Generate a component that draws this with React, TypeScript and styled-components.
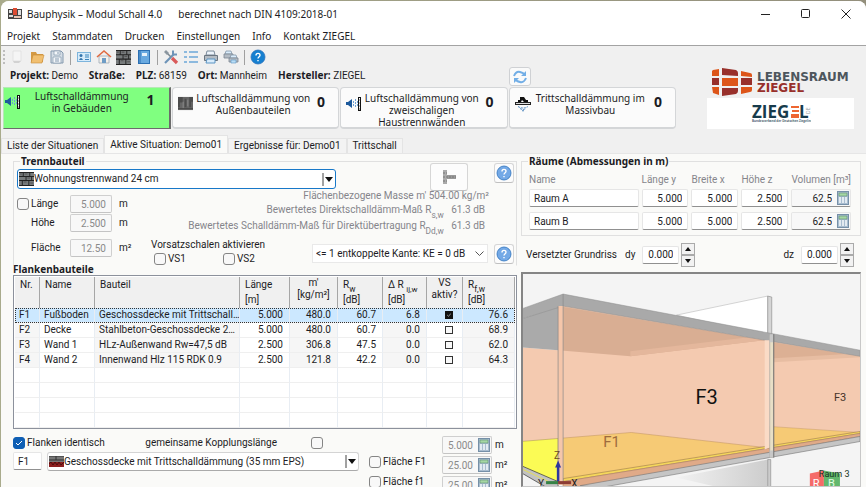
import React, { useState } from 'react';
import styled, { createGlobalStyle, css } from 'styled-components';

const uiFont = "'Noto Sans', 'Open Sans', sans-serif";

const Global = createGlobalStyle`
  *, *::before, *::after { box-sizing: border-box; }
  html, body, #root { height: 100%; }
  body {
    margin: 0;
    overflow: hidden;
    background: linear-gradient(90deg, #a9ab8c, #938f7c);
    font-family: Roboto, 'Noto Sans', sans-serif;
    font-size: 10px;
    line-height: 12px;
    color: #1c1c24;
  }
  button, input, select { font: inherit; color: inherit; margin: 0; }
`;

const Window = styled.div`
  display: flex;
  flex-direction: column;
  height: calc(100vh - 1px);
  margin: 1px 0 0 1px;
  overflow: hidden;
  background: #f0f0f0;
  border-radius: 8px 8px 0 0;
`;

const TitleBar = styled.header`
  display: flex;
  align-items: center;
  height: 26px;
  flex: none;
  padding-left: 7px;
  gap: 5px;
  background: #fff;
  font-family: ${uiFont};
`;
const TitleText = styled.span`margin-right: 11px;`;
const WindowButtons = styled.div`display: flex; margin-left: auto;`;
const WindowButton = styled.button`
  width: 40px;
  height: 24px;
  padding: 0;
  border: 0;
  background: none;
  display: grid;
  place-items: center;
`;

const MenuBar = styled.nav`
  display: flex;
  flex: none;
  height: 19px;
  padding: 2px 6px 0;
  gap: 12px;
  background: #fff;
  border-bottom: 1px solid #a3a3a3;
  font-family: ${uiFont};
`;
const MenuItem = styled.button`
  padding: 0;
  border: 0;
  background: none;
  height: 14px;
`;

const ToolBar = styled.div`
  display: flex;
  align-items: center;
  flex: none;
  height: 21px;
  padding: 1px 2px 0;
  gap: 4px;
`;
const Tool = styled.button`
  width: 16px;
  height: 16px;
  padding: 0;
  border: 0;
  background: none;
  svg { display: block; }
`;
const Separator = styled.span`width: 1px; height: 15px; background: #a0a0a0; margin: 0 1px;`;
const Grip = styled.span`
  width: 2px;
  height: 14px;
  background: repeating-linear-gradient(#bdbdbd 0 2px, transparent 2px 4px);
`;

const Header = styled.div`
  display: flex;
  flex: none;
  gap: 31px;
  padding: 0 12px 0 2px;
`;
const Situations = styled.div`
  flex: 1;
  display: grid;
  grid-template-columns: repeat(4, minmax(0, 1fr));
  grid-template-rows: 20px 42px;
  column-gap: 1px;
`;
const ProjectInfo = styled.div`
  grid-column: 1 / 4;
  display: flex;
  gap: 11px;
  padding: 2px 0 0 7px;
  white-space: nowrap;
  b { font-family: ${uiFont}; }
`;
const RefreshButton = styled.button`
  width: 22px;
  height: 19px;
  padding: 0;
  border: 1px solid #cfd1d4;
  border-radius: 3px;
  background: #fafafa;
  display: grid;
  place-items: center;
`;
const SituationCard = styled.button<{ $active?: boolean }>`
  display: grid;
  grid-template-columns: 18px 1fr 20px;
  align-items: start;
  padding: 4px 7px 0 5px;
  line-height: 12px;
  white-space: nowrap;
  text-align: center;
  font-family: ${uiFont};
  background: #fbfbfb;
  border: 1px solid #d4d6d8;
  border-bottom-width: 2px;
  border-radius: 4px;
  svg { margin-top: 4px; }
  ${p => p.$active && css`
    padding: 2px 8px 0 1px;
    background: #80ff80;
    border-color: #b5e8b5 #6c6c6c #6c6c6c #b5e8b5;
    border-width: 1px 2px 1px 1px;
    border-radius: 0;
  `}
`;
const Count = styled.strong`font-size: 14px; line-height: 20px;`;

const Logos = styled.div`width: 147px; flex: none;`;
const LogoTop = styled.div`height: 31px; padding-left: 5px;`;
const LogoBottom = styled.div`height: 31px; background: #fff; display: grid; place-items: center;`;

const Tabs = styled.div`
  display: flex;
  align-items: flex-end;
  flex: none;
  height: 24px;
`;
const Tab = styled.button<{ $active?: boolean }>`
  height: ${p => (p.$active ? 18 : 15)}px;
  padding: 0 5px;
  white-space: nowrap;
  border: 1px solid #e4e4e4;
  border-bottom: 0;
  background: ${p => (p.$active ? '#fafaf8' : '#f3f3f3')};
`;

const Page = styled.main`
  flex: 1;
  min-height: 0;
  display: grid;
  grid-template-columns: 504fr 340fr;
  gap: 4px;
  padding: 1px 5px 0 12px;
  background: #fafaf8;
  overflow: hidden;
  border-top: 1px solid #e6e6e6;
`;
const Column = styled.div`display: flex; flex-direction: column; min-width: 0; min-height: 0;`;

const Group = styled.fieldset<{ $open?: boolean }>`
  margin: 0;
  min-width: 0;
  padding: 0 2px 0 3px;
  border: 1px solid #e0e0e0;
  ${p => p.$open && css`border-bottom-color: transparent;`}
`;
const Legend = styled.legend`
  margin-left: 3px;
  padding: 0 1px;
  font-family: ${uiFont};
  font-weight: 700;
  line-height: 12px;
`;
const Heading = styled.h2`margin: -3px 0 0; font-family: ${uiFont}; font-size: 10px; line-height: 12px; font-weight: 700;`;

const ComponentRow = styled.div`
  display: flex;
  align-items: flex-start;
  height: 27px;
  margin-top: -4px;
`;
const Combo = styled.div<{ $focus?: boolean }>`
  display: flex;
  align-items: center;
  flex: 0 1 ${p => (p.$focus ? 319 : 312)}px;
  min-width: 0;
  height: ${p => (p.$focus ? 20 : 19)}px;
  margin-top: ${p => (p.$focus ? 6 : 0)}px;
  padding: 0 1px;
  border: 1px solid ${p => (p.$focus ? '#1878c8' : '#d4d4d4')};
  border-bottom-color: ${p => (p.$focus ? '#1878c8' : '#aaa')};
  border-radius: 3px;
  background: #fff;
`;
const ComboSelect = styled.select`
  flex: 1;
  min-width: 0;
  height: 100%;
  padding: 0;
  border: 0;
  background: none;
  appearance: none;
  outline: 0;
`;
const SquareButton = styled.button<{ $wide?: boolean }>`
  flex: none;
  width: ${p => (p.$wide ? 38 : 20)}px;
  height: ${p => (p.$wide ? 28 : 20)}px;
  padding: 0;
  display: grid;
  place-items: center;
  border: 1px solid #d6d6d6;
  border-bottom-color: #c0c0c0;
  border-radius: 3px;
  background: #fcfcfc;
  ${p => p.$wide && css`margin: 0 26px 0 auto;`}
`;

const GroupBody = styled.div`display: flex; gap: 4px;`;
const Dimensions = styled.div`
  display: grid;
  grid-template-columns: 53px 42px 20px;
  grid-template-rows: 18px 18px 24px;
  row-gap: 1px;
  align-items: center;
  align-content: start;
  padding-top: 5px;
  width: 130px;
  > span { padding-left: 7px; }
  > :nth-child(n + 7) { align-self: end; }
`;
const DimLabel = styled.label<{ $indent?: boolean }>`
  display: flex;
  align-items: center;
  height: 18px;
  gap: 2px;
  padding-left: ${p => (p.$indent ? 14 : 0)}px;
`;
const Unit = styled.span`line-height: 18px;`;
const Check = styled.input.attrs({ type: 'checkbox' })<{ $small?: boolean }>`
  appearance: none;
  flex: none;
  width: ${p => (p.$small ? 8 : 12)}px;
  height: ${p => (p.$small ? 8 : 12)}px;
  border: 1px solid ${p => (p.$small ? '#333' : '#858585')};
  border-radius: ${p => (p.$small ? 0 : 3)}px;
  background: #f8f8f8;
  &:checked {
    border-color: ${p => (p.$small ? '#111' : '#0f5fb4')};
    background: ${p => (p.$small ? '#111' : '#0f5fb4')}
      url("data:image/svg+xml,%3Csvg xmlns='http://www.w3.org/2000/svg' viewBox='0 0 10 10'%3E%3Cpath d='M2 5l2 2 4-4' fill='none' stroke='white'/%3E%3C/svg%3E") center / contain;
  }
`;
const Field = styled.input<{ $muted?: boolean; $text?: boolean }>`
  width: 100%;
  min-width: 0;
  height: 18px;
  padding: 0 5px 0 4px;
  text-align: ${p => (p.$text ? 'left' : 'right')};
  border: 1px solid ${p => (p.$muted ? '#cfcfcf' : '#e6e6e6')};
  border-bottom-color: ${p => (p.$muted ? '#c4c4c4' : '#909090')};
  border-radius: 2px;
  background: ${p => (p.$muted ? '#f8f8f8' : '#fff')};
  color: ${p => (p.$muted ? '#8a8a8a' : 'inherit')};
  outline: 0;
`;
const Results = styled.div`flex: 1; min-width: 0;`;
const Result = styled.div<{ $first?: boolean }>`
  height: ${p => (p.$first ? 14 : 16)}px;
  padding-right: ${p => (p.$first ? 25 : 29)}px;
  text-align: right;
  white-space: nowrap;
  color: #85858b;
  sub { position: relative; top: 5px; vertical-align: baseline; line-height: 0; margin-right: 5px; }
`;
const Lining = styled.div`display: flex; gap: 6px; margin-top: 8px; align-items: flex-start;`;
const LiningChecks = styled.div`flex: 1; margin-top: -5px;`;
const CheckLine = styled.div`display: flex; gap: 37px; padding-left: 3px; margin-top: 2px;`;
const CheckLabel = styled.label`display: flex; align-items: center; gap: 2px; white-space: nowrap;`;
const EdgeSelect = styled.div`
  display: flex;
  align-items: center;
  width: 176px;
  height: 19px;
  padding: 0 3px;
  border: 1px solid #e9e9e9;
  background: #fff;
`;

const TableBox = styled.div`
  padding: 1px 1px 0;
  border: 1px solid #8c919c;
  background: #fff;
`;
const Table = styled.table`
  width: 100%;
  table-layout: fixed;
  border-collapse: separate;
  border-spacing: 0;
`;
const Th = styled.th<{ $center?: boolean }>`
  height: 31px;
  padding: 0 0 0 ${p => (p.$center ? 0 : 5)}px;
  font-weight: 400;
  text-align: ${p => (p.$center ? 'center' : 'left')};
  vertical-align: top;
  background: #f0f0f0;
  border-right: 1px solid #a6a6a6;
  white-space: nowrap;
  line-height: ${p => (p.$center ? 12 : 15)}px;
  sub { position: relative; top: 4px; vertical-align: baseline; line-height: 0; }
  small { font-size: 8px; }
`;
const Tr = styled.tr<{ $selected?: boolean }>`
  ${p => p.$selected && css`
    && td { background: #cce8ff; }
    outline: 1px dotted #333;
    outline-offset: -1px;
  `}
`;
const Td = styled.td<{ $num?: boolean; $grey?: boolean; $mid?: boolean }>`
  height: 15px;
  padding: 0 ${p => (p.$num ? 6 : 0)}px 0 ${p => (p.$mid ? 9 : 4)}px;
  line-height: 14px;
  overflow: hidden;
  white-space: nowrap;
  text-align: ${p => (p.$num ? 'right' : 'left')};
  background: ${p => (p.$grey ? '#f6f6f6' : '#fff')};
  border-right: 1px solid #e8edf3;
  border-bottom: 1px solid #efefef;
  input { display: block; margin: 0 auto; }
`;

const Bottom = styled.div`display: flex; padding-top: 7px; flex: none;`;
const FlankArea = styled.div`flex: 0 1 346px; min-width: 0;`;
const FlankTop = styled.div`display: flex; align-items: center; height: 13px; > :last-child { margin: 0 36px 0 auto; gap: 34px; }`;
const FlankPick = styled.div`display: grid; grid-template-columns: 29px 1fr; gap: 5px; margin-top: 3px;`;
const AreaChecks = styled.div`display: grid; align-content: start; gap: 8px; padding: 20px 0 0 10px; width: 83px;`;
const AreaValues = styled.div`display: grid; gap: 2px; width: 72px;`;
const AreaLine = styled.div`display: flex; align-items: center; gap: 3px;`;
const ValueBox = styled.div<{ $muted?: boolean }>`
  display: flex;
  align-items: center;
  width: ${p => (p.$muted ? '50px' : 'auto')};
  min-width: 0;
  height: 18px;
  padding-right: 1px;
  border: 1px solid ${p => (p.$muted ? '#cfcfcf' : '#e6e6e6')};
  border-bottom-color: ${p => (p.$muted ? '#c4c4c4' : '#909090')};
  border-radius: 2px;
  background: #f8f8f8;
`;
const BareField = styled.input<{ $muted?: boolean }>`
  flex: 1;
  min-width: 0;
  width: 100%;
  height: 16px;
  padding: 0 5px 0 0;
  border: 0;
  background: none;
  text-align: right;
  outline: 0;
  color: ${p => (p.$muted ? '#8a8a8a' : 'inherit')};
`;
const CalcButton = styled.button`padding: 0; border: 0; background: none; display: block; svg { display: block; }`;

const Rooms = styled.div`
  display: grid;
  grid-template-columns: 112fr 48fr 48fr 48fr 55fr;
  column-gap: 3px;
  row-gap: 5px;
  padding: 7px 7px 5px 4px;
  > * { min-width: 0; }
  > span { color: #85858b; white-space: nowrap; margin-bottom: -2px; }
  > span:last-of-type { justify-self: end; min-width: max-content; }
`;
const Offsets = styled.div`
  display: flex;
  align-items: center;
  height: 36px;
  padding: 1px 7px 0 5px;
  > span { margin-right: 8px; }
`;
const OffsetGroup = styled.label<{ $end?: boolean }>`
  display: flex;
  align-items: center;
  gap: 7px;
  ${p => p.$end && css`margin-left: auto;`}
  input { width: 37px; }
`;
const Spinner = styled.span`display: grid; margin-left: -5px;`;
const Spin = styled.button`
  width: 14px;
  height: 12px;
  padding: 0;
  display: grid;
  place-items: center;
  border: 1px solid #aaa;
  background: #f2f2f2;
`;
const Viewport = styled.div`
  flex: 1;
  min-height: 0;
  overflow: hidden;
  background: #f4f4f4;
  border: 1px solid #c8c8c8;
  border-top: 2px solid #858585;
  border-left: 2px solid #858585;
  svg { display: block; width: 100%; height: 100%; }
`;

const Brick = ({ w = 16, h = 14 }: { w?: number; h?: number }) => (
  <svg width={w} height={h} viewBox="0 0 16 14" preserveAspectRatio="none">
    <rect width="16" height="14" fill="#222" />
    <path d="M0 1h4v3H0zM5 1h6v3H5zM12 1h4v3h-4zM0 5h7v3H0zM8 5h5v3H8zM14 5h2v3h-2zM0 9h3v4H0zM4 9h6v4H4zM11 9h5v4h-5z" fill="#777b7c" />
    <path d="M1 2h2M6 2h3M9 6h3M5 10h3M12 11h3" stroke="#555" />
  </svg>
);
const Insulation = () => (
  <svg width="15" height="15" viewBox="0 0 16 14">
    <rect width="16" height="14" fill="#666" />
    <path d="M0 0h5v6H2v5H0zM7 2h2v9H7zM12 0h4v5h-2v6h-2z" fill="#4c4c4c" />
    <path d="M5 5h1v7H5zM10 3h1v7h-1z" fill="#8c8c8c" />
    <path d="M0 12.500h16" stroke="#444" />
  </svg>
);
const SlabIcon = () => (
  <svg width="15" height="11" viewBox="0 0 15 11">
    <rect width="15" height="11" fill="#777" />
    <path d="M0 0h15M0 4h15M7 0v4" stroke="#333" />
    <rect y="6" width="15" height="5" fill="#8c1f1f" />
    <path d="M0 8l2-2 2 3 2-3 2 3 2-3 2 3 3-3" fill="none" stroke="#4b0f0f" />
  </svg>
);
const Speaker = () => (
  <svg width="16" height="16" viewBox="0 0 16 16">
    <path d="M0 6h2l4-3v9L2 9H0z" fill="#1d5a9c" />
    <path d="M7.500 5v5M9.500 3v9M11.500 5v5" stroke="#6ca0d4" strokeDasharray="2 1" fill="none" />
    <rect x="12.500" y="1.500" width="2" height="13" fill="#fff" stroke="#111" />
    <path d="M13 4h1M13 7h1M13 10h1M13 13h1" stroke="#333" strokeWidth=".7" />
  </svg>
);
const Impact = () => (
  <svg width="16" height="16" viewBox="0 0 16 16">
    <path d="M5 1h4l2 3h2v2H9L7 4 6 6H3V4h2z" fill="#111" />
    <rect x=".5" y="6.500" width="15" height="2" fill="#ddd" stroke="#222" />
    <path d="M3 10.500q5 3 10 0M5 12.500q3 2 6 0M7 14.500q1 1 2 0" fill="none" stroke="#4e86bd" strokeDasharray="2 1" />
  </svg>
);
const Calc = () => (
  <svg width="12" height="14" viewBox="0 0 12 14">
    <rect x=".5" y=".5" width="11" height="13" fill="#a9bdd0" stroke="#7690a8" />
    <rect x="2" y="2" width="8" height="3" fill="#a5d6a4" stroke="#5f8f72" strokeWidth=".6" />
    <path d="M2 7h2M5 7h2M8 7h2M2 9h2M5 9h2M8 9h2M2 11h2M5 11h2M8 11h2" stroke="#f5f9fc" strokeWidth="1.300" />
  </svg>
);
const Help = ({ r = 7, fill = '#74a9e6' }: { r?: number; fill?: string }) => (
  <svg width="16" height="16" viewBox="0 0 16 16">
    <circle cx="8" cy="8" r={r} fill={fill} stroke="#2e74bd" strokeWidth=".8" />
    <path d="M6 6.500C6 3.700 10 3.700 10 6.300C10 7.800 8 7.700 8 9.600M8 11v1.300" fill="none" stroke="#fff" strokeWidth="1.400" />
  </svg>
);
const DropArrow = () => (
  <svg width="12" height="15" viewBox="0 0 12 15">
    <path d="M1 1v13" stroke="#444" />
    <path d="M3 5h8L7 10z" fill="#111" />
  </svg>
);

const toolIcons: Record<string, React.ReactNode> = {
  Neu: <><path d="M4 2h8v10H4z" fill="#f5f5f5" stroke="#ddd" strokeWidth=".7" /><path d="M4 12h8l-2 2H5z" fill="#d2d2d2" /></>,
  Öffnen: <><path d="M2 3h5l1 2h6v8H2z" fill="#d49a45" /><path d="M4 6h11l-2 8H2z" fill="#f1bf70" stroke="#c88c38" strokeWidth=".6" /></>,
  Speichern: <><path d="M2 2h10l2 2v10H2z" fill="#d5dde5" stroke="#8499ae" /><path d="M5 2h6v4H5zM4 8h8v6H4z" fill="#f4f7fa" stroke="#8499ae" strokeWidth=".7" /><path d="M9 3v2M6 10h4M6 12h4" stroke="#8499ae" /></>,
  Kontakte: <><rect x="1.500" y="3.500" width="13" height="9" fill="#d6ebfa" stroke="#7db4dc" /><circle cx="5" cy="6.500" r="1.500" fill="#3676ad" /><path d="M3 11q2-4 4 0z" fill="#3676ad" /><path d="M9 6h4M9 8h4M9 10.500h4" stroke="#3b83ba" /></>,
  Start: <><path d="M3 7h10v7H3z" fill="#f6f1ea" stroke="#9daab6" strokeWidth=".8" /><path d="M1 8l7-6 7 6" fill="none" stroke="#e06b42" strokeWidth="1.600" /><path d="M6 9h4v5H6z" fill="#6f9dc6" /></>,
  Buch: <><rect x="2.500" y="1.500" width="11" height="13" fill="#68a9e0" stroke="#2c70b3" /><path d="M4 2v12" stroke="#2c70b3" /><path d="M6 4h5v3H6z" fill="#e6f2fb" /></>,
  Werkzeuge: <><path d="M2 14L11 5" stroke="#6d93b8" strokeWidth="2.200" /><path d="M10 1.500v4h4" stroke="#6d93b8" strokeWidth="2" fill="none" /><path d="M3 3l5 5" stroke="#7c8790" strokeWidth="1.500" /><path d="M9 9l5 5" stroke="#d95a5a" strokeWidth="3.200" /><path d="M1 3l2-2 3 3-2 2z" fill="#8b969f" /></>,
  Liste: <path d="M1 3h3M1 8h3M1 13h3M6 3h9M6 8h9M6 13h9" stroke="#6ba6d8" strokeWidth="1.500" />,
  Drucken: <><path d="M4 2h7l1 4H3z" fill="#edf4fb" stroke="#7b8b9b" /><path d="M1.500 6.500h13v5h-13z" fill="#b4bcc4" stroke="#6a7580" /><path d="M4 10h8v4H3z" fill="#d9ecfb" stroke="#5b94c3" /></>,
  Mehrfachdruck: <><path d="M3 2h5l1 3H2z" fill="#d9ecfb" stroke="#8497a8" strokeWidth=".8" /><path d="M1 5h9v4H1z" fill="#b4bcc4" stroke="#7b8792" strokeWidth=".8" /><path d="M8 6h5l1 3H7z" fill="#d9ecfb" stroke="#8497a8" strokeWidth=".8" /><path d="M6 9h9v4H6z" fill="#b4bcc4" stroke="#7b8792" strokeWidth=".8" /><path d="M8 11h5v3H8z" fill="#b8ddf6" stroke="#5b94c3" strokeWidth=".6" /></>,
};
const ToolButton = ({ name }: { name: string }) => (
  <Tool aria-label={name}><svg width="16" height="16" viewBox="0 0 16 16">{toolIcons[name]}</svg></Tool>
);

const BrickLogo = () => (
  <svg width="144" height="31" viewBox="0 0 144 31">
    <g fill="#dd5519">
      <path d="M1 3l6-1v7H0V4zM29 4l9 2q2 0 2 2v2l-11-1zM10 11h16v8H10zM0 20h7v8l-6-2zM29 20h11v3q0 2-2 2l-9 2z" />
    </g>
    <g fill="#98302b">
      <path d="M10 1l14 2q2 1 2 3v3L10 8zM0 11h7v7H0zM29 11h11v7H29zM10 21h16v3q0 2-2 3l-14 2z" />
    </g>
    <text x="45" y="14" fontSize="12" fontFamily="DejaVu Sans, sans-serif" fontWeight="700" fill="#4d565d">LEBENSRAUM</text>
    <text x="45" y="25" fontSize="12" fontFamily="DejaVu Sans, sans-serif" fontWeight="700" fill="#98302b">ZIEGEL</text>
  </svg>
);
const ZiegelLogo = () => (
  <svg width="60" height="28" viewBox="0 0 60 28">
    <text x="1" y="18" fontSize="17" fontFamily="Open Sans, sans-serif" fontWeight="700" fill="#173b4c">ZIEG</text>
    <path d="M40 6h8v2h-8zM41 10h7v2h-7zM40 14h8v4h-8z" fill="#ee6631" />
    <text x="48" y="18" fontSize="17" fontFamily="Open Sans, sans-serif" fontWeight="700" fill="#173b4c">L</text>
    <text transform="translate(59 14) rotate(-90)" fontSize="5" fontFamily="Open Sans, sans-serif" fill="#8b989e">DE</text>
    <text x="1" y="22" fontSize="3" fontFamily="Open Sans, sans-serif" fontWeight="700" fill="#4b6470">Bundesverband der Deutschen Ziegelindustrie</text>
  </svg>
);

const BuildingView = () => (
  <svg viewBox="523 275 336 212" preserveAspectRatio="xMinYMin slice" role="img" aria-label="3D-Ansicht der Räume">
    <defs>
      <linearGradient id="wall" x1="0" x2="1"><stop offset="0" stopColor="#f2f2f2" /><stop offset="1" stopColor="#cdcdcd" /></linearGradient>
    </defs>
    <path d="M676 316L767 297V336z" fill="#fff" stroke="#aaa" strokeWidth=".5" />
    <path d="M767 297l4 1v38h-4z" fill="#d5d5d5" stroke="#888" strokeWidth=".6" />
    <path d="M521 348L558 351 563 306 859 357V434L563 486 521 467z" fill="#f4cab0" />
    <path d="M521 320L558 307V351L521 348z" fill="#aaa" />
    <path d="M558 307L764 341 630 357 558 351z" fill="#d9ae93" />
    <path d="M630 352L748 338 764 341 630 357z" fill="#e4b79c" />
    <path d="M773 343L859 357 773 362z" fill="#dcb094" />
    <path d="M773 359L859 354V358L773 363z" fill="#e7bda2" />
    <path d="M521 442L558 439V482L521 467z" fill="#fbfb55" />
    <path d="M558 439L631 433 764 448 563 480H558z" fill="#f6ca75" stroke="#be9360" strokeWidth=".5" />
    <path d="M521 442L558 439" stroke="#a49153" strokeWidth=".5" />
    <path d="M769 427L859 433 769 449z" fill="#f6ca75" stroke="#be9360" strokeWidth=".4" />
    <path d="M563 479L859 432V434L563 482z" fill="#f5d65c" stroke="#8d6b49" strokeWidth=".5" />
    <path d="M563 482L859 434V437L580 487H563z" fill="#e0aa88" stroke="#a47c64" strokeWidth=".5" />
    <path d="M580 486L859 437V442L600 488z" fill="#c5c5c5" stroke="#777" strokeWidth=".6" />
    <path d="M521 466L558 482V487H545L521 473z" fill="#c2c2c2" stroke="#333" strokeWidth=".7" />
    <path d="M521 469L553 484" stroke="#e4dd59" />
    <path d="M521 310L563 295 859 351V357L563 307 521 320z" fill="#a9a9a9" stroke="#8e8e8e" strokeWidth=".5" />
    <path d="M764 341h5v107l-5 2z" fill="#fadbc6" />
    <path d="M769 336h4v122h-4z" fill="#e8dfc6" stroke="#9f9f9f" strokeWidth=".6" />
    <path d="M769 335h4v8h-4zM769 451h4v7h-4z" fill="#c7c7c7" />
    <path d="M773 335v123" stroke="#555" strokeWidth=".7" />
    <path d="M558 307h5v178h-5z" fill="#f5c6aa" />
    <path d="M558 307v173M563 295v190" stroke="#888" strokeWidth=".7" />
    <path d="M676 478L767 460V487H715z" fill="url(#wall)" />
    <path d="M767 460h3v27h-3z" fill="#ccc" stroke="#777" strokeWidth=".5" />
    <g fontFamily="Roboto, sans-serif">
      <text x="695" y="405" fontSize="20" fill="#111">F3</text>
      <text x="833" y="402" fontSize="11" fill="#443329">F3</text>
      <text x="603" y="447" fontSize="15" fill="#9e6b3e">F1</text>
      <text x="554" y="459" fontSize="10" fill="#6a4b27">Z</text>
      <text x="538" y="487" fontSize="10" fill="#222">Y</text>
      <text x="571" y="487" fontSize="10" fill="#222">X</text>
      <path d="M809 474l14-3v18h-14z" fill="#f56b68" />
      <path d="M823 471l16 3v15h-16z" fill="#62b76d" />
      <text x="812" y="487" fontSize="11" fill="#fff">R</text>
      <text x="827" y="487" fontSize="11" fill="#e2ffe5">B</text>
      <text x="818" y="477" fontSize="9" fill="#16351d">Raum 3</text>
    </g>
    <path d="M558 483V466" stroke="#2d379e" strokeWidth="2.500" />
    <path d="M555 468l3-7 3 7z" fill="#2d379e" />
    <path d="M546 483h12" stroke="#368247" strokeWidth="3" />
    <path d="M558 483h13" stroke="#8d3c34" strokeWidth="3" />
  </svg>
);

const flanks = [
  ['F1', 'Fußboden', 'Geschossdecke mit Trittschall…', '5.000', '480.0', '60.7', '6.8', '76.6'],
  ['F2', 'Decke', 'Stahlbeton-Geschossdecke 2…', '5.000', '480.0', '60.7', '0.0', '68.9'],
  ['F3', 'Wand 1', 'HLz-Außenwand Rw=47,5 dB', '2.500', '306.8', '47.5', '0.0', '62.0'],
  ['F4', 'Wand 2', 'Innenwand Hlz 115 RDK 0.9', '2.500', '121.8', '42.2', '0.0', '64.3'],
];
const columnWidths = [25, 55, 0, 50, 48, 45, 44, 36, 52];

const SpinPair = () => (
  <Spinner>
    <Spin aria-label="Erhöhen"><svg width="6" height="4"><path d="M0 4h6L3 0z" fill="#111" /></svg></Spin>
    <Spin aria-label="Verringern"><svg width="6" height="4"><path d="M0 0h6L3 4z" fill="#111" /></svg></Spin>
  </Spinner>
);
const Area = ({ value, unit, name }: { value: string; unit: string; name: string }) => (
  <AreaLine>
    <ValueBox $muted><BareField $muted defaultValue={value} aria-label={name} /><CalcButton aria-label="Rechner"><Calc /></CalcButton></ValueBox>
    {unit}
  </AreaLine>
);

export default function App() {
  const [tab, setTab] = useState(1);
  return (
    <>
      <Global />
      <Window>
        <TitleBar>
          <svg width="14" height="12" viewBox="0 0 14 12">
            <path d="M0 1h14v10H0z" fill="#444" /><path d="M1 2h3v3H1zM10 2h3v5h-3zM1 7h4v2H1z" fill="#ddd" />
            <path d="M5 0h4v7H5z" fill="#dc4b32" /><path d="M6 8h7v2H6z" fill="#e7c5b4" />
          </svg>
          <TitleText>Bauphysik – Modul Schall 4.0</TitleText>
          <span>berechnet nach DIN 4109:2018-01</span>
          <WindowButtons>
            <WindowButton aria-label="Minimieren"><svg width="10" height="10"><path d="M0 5.500h9" stroke="#222" /></svg></WindowButton>
            <WindowButton aria-label="Maximieren"><svg width="10" height="10"><rect x=".5" y=".5" width="8" height="8" rx="1" fill="none" stroke="#222" /></svg></WindowButton>
            <WindowButton aria-label="Schließen"><svg width="10" height="10"><path d="M.5.5l9 9M9.500.5l-9 9" stroke="#222" /></svg></WindowButton>
          </WindowButtons>
        </TitleBar>
        <MenuBar>
          {['Projekt', 'Stammdaten', 'Drucken', 'Einstellungen', 'Info', 'Kontakt ZIEGEL'].map(m => <MenuItem key={m}>{m}</MenuItem>)}
        </MenuBar>
        <ToolBar>
          <Grip />
          <ToolButton name="Neu" /><ToolButton name="Öffnen" /><ToolButton name="Speichern" />
          <Separator />
          <ToolButton name="Kontakte" /><ToolButton name="Start" />
          <Tool aria-label="Bauteile"><Brick w={15} h={15} /></Tool>
          <ToolButton name="Buch" />
          <Separator />
          <ToolButton name="Werkzeuge" /><ToolButton name="Liste" /><ToolButton name="Drucken" /><ToolButton name="Mehrfachdruck" />
          <Separator />
          <Tool aria-label="Hilfe"><Help fill="#1680d0" /></Tool>
        </ToolBar>
        <Header>
          <Situations>
            <ProjectInfo>
              <span><b>Projekt:</b> Demo</span><span><b>Straße:</b></span><span><b>PLZ:</b> 68159</span>
              <span><b>Ort:</b> Mannheim</span><span><b>Hersteller:</b> ZIEGEL</span>
            </ProjectInfo>
            <RefreshButton aria-label="Aktualisieren">
              <svg width="16" height="16" viewBox="0 0 16 16">
                <path d="M2 7Q4 2 8 3T13 6M14 9Q12 14 8 13T3 10" fill="none" stroke="#72aee6" strokeWidth="2" />
                <path d="M14 2v5H9zM2 14V9h5z" fill="#72aee6" />
              </svg>
            </RefreshButton>
            <SituationCard $active><Speaker /><span>Luftschalldämmung<br />in Gebäuden</span><Count>1</Count></SituationCard>
            <SituationCard><Insulation /><span>Luftschalldämmung von<br />Außenbauteilen</span><Count>0</Count></SituationCard>
            <SituationCard><Speaker /><span>Luftschalldämmung von<br />zweischaligen<br />Haustrennwänden</span><Count>0</Count></SituationCard>
            <SituationCard><Impact /><span>Trittschalldämmung im<br />Massivbau</span><Count>0</Count></SituationCard>
          </Situations>
          <Logos>
            <LogoTop><BrickLogo /></LogoTop>
            <LogoBottom><ZiegelLogo /></LogoBottom>
          </Logos>
        </Header>
        <Tabs role="tablist">
          {['Liste der Situationen', 'Aktive Situation: Demo01', 'Ergebnisse für: Demo01', 'Trittschall'].map((t, i) => (
            <Tab key={t} role="tab" aria-selected={tab === i} $active={tab === i} onClick={() => setTab(i)}>{t}</Tab>
          ))}
        </Tabs>
        <Page>
          <Column>
            <Group $open>
              <Legend>Trennbauteil</Legend>
              <ComponentRow>
                <Combo $focus>
                  <Brick w={15} />
                  <ComboSelect aria-label="Trennbauteil"><option>Wohnungstrennwand 24 cm</option></ComboSelect>
                  <DropArrow />
                </Combo>
                <SquareButton $wide aria-label="Stoßstelle">
                  <svg width="16" height="16" viewBox="0 0 16 16"><path d="M2 1h4v14H2z" fill="#aaa" /><path d="M6 6h9v4H6z" fill="#999" /><path d="M2 4h4M2 8h13M2 12h4" stroke="#777" strokeDasharray="2 1" /></svg>
                </SquareButton>
                <SquareButton aria-label="Hilfe"><Help /></SquareButton>
              </ComponentRow>
              <GroupBody>
                <Dimensions>
                  <DimLabel><Check />Länge</DimLabel><Field $muted defaultValue="5.000" aria-label="Länge" /><Unit>m</Unit>
                  <DimLabel $indent htmlFor="height">Höhe</DimLabel><Field id="height" $muted defaultValue="2.500" /><Unit>m</Unit>
                  <DimLabel $indent htmlFor="area">Fläche</DimLabel><Field id="area" $muted defaultValue="12.50" /><Unit>m²</Unit>
                </Dimensions>
                <Results>
                  <Result $first>Flächenbezogene Masse m' 504.00 kg/m²</Result>
                  <Result>Bewertetes Direktschalldämm-Maß R<sub>s,w</sub> 61.3 dB</Result>
                  <Result>Bewertetes Schalldämm-Maß für Direktübertragung R<sub>Dd,w</sub> 61.3 dB</Result>
                  <Lining>
                    <LiningChecks>
                      Vorsatzschalen aktivieren
                      <CheckLine><CheckLabel><Check />VS1</CheckLabel><CheckLabel><Check />VS2</CheckLabel></CheckLine>
                    </LiningChecks>
                    <EdgeSelect>
                      <ComboSelect aria-label="Entkoppelte Kanten"><option>&lt;= 1 entkoppelte Kante: KE = 0 dB</option></ComboSelect>
                      <svg width="9" height="6"><path d="M.5.5l4 4 4-4" fill="none" stroke="#555" /></svg>
                    </EdgeSelect>
                    <SquareButton aria-label="Hilfe"><Help /></SquareButton>
                  </Lining>
                </Results>
              </GroupBody>
            </Group>
            <Heading>Flankenbauteile</Heading>
            <TableBox>
              <Table>
                <colgroup>{columnWidths.map((w, i) => <col key={i} width={w || undefined} />)}</colgroup>
                <thead>
                  <tr>
                    <Th>Nr.</Th><Th>Name</Th><Th>Bauteil</Th><Th>Länge<br />[m]</Th><Th $center>m'<br />[kg/m²]</Th>
                    <Th>R<sub>w</sub><br />[dB]</Th><Th>Δ R <sub><small>ij,w</small></sub><br />[dB]</Th><Th $center>VS<br />aktiv?</Th><Th>R<sub>f,w</sub><br />[dB]</Th>
                  </tr>
                </thead>
                <tbody>
                  {flanks.map((f, i) => (
                    <Tr key={f[0]} $selected={i === 0}>
                      <Td $grey>{f[0]}</Td><Td>{f[1]}</Td><Td $grey>{f[2]}</Td><Td $num>{f[3]}</Td><Td $num $grey>{f[4]}</Td>
                      <Td $num>{f[5]}</Td><Td $num $grey>{f[6]}</Td>
                      <Td $mid><Check $small defaultChecked={i === 0} aria-label={`VS aktiv ${f[0]}`} /></Td>
                      <Td $num $grey>{f[7]}</Td>
                    </Tr>
                  ))}
                  {[0, 1, 2, 3].map(r => <Tr key={r}>{columnWidths.map((_, c) => <Td key={c} />)}</Tr>)}
                </tbody>
              </Table>
            </TableBox>
            <Bottom>
              <FlankArea>
                <FlankTop>
                  <CheckLabel><Check defaultChecked />Flanken identisch</CheckLabel>
                  <CheckLabel>gemeinsame Kopplungslänge<Check /></CheckLabel>
                </FlankTop>
                <FlankPick>
                  <Field $text defaultValue="F1" aria-label="Flanke" />
                  <Combo>
                    <SlabIcon />
                    <ComboSelect aria-label="Flankenbauteil"><option>Geschossdecke mit Trittschalldämmung (35 mm EPS)</option></ComboSelect>
                    <DropArrow />
                  </Combo>
                </FlankPick>
              </FlankArea>
              <AreaChecks>
                <CheckLabel><Check />Fläche F1</CheckLabel>
                <CheckLabel><Check />Fläche f1</CheckLabel>
              </AreaChecks>
              <AreaValues>
                <Area name="Kopplungslänge" value="5.000" unit="m" />
                <Area name="Fläche F1" value="25.00" unit="m²" />
                <Area name="Fläche f1" value="25.00" unit="m²" />
              </AreaValues>
            </Bottom>
          </Column>
          <Column>
            <Group>
              <Legend>Räume (Abmessungen in m)</Legend>
              <Rooms>
                <span>Name</span><span>Länge y</span><span>Breite x</span><span>Höhe z</span><span>Volumen [m³]</span>
                {['Raum A', 'Raum B'].map(r => (
                  <React.Fragment key={r}>
                    <Field $text defaultValue={r} aria-label="Name" />
                    <Field defaultValue="5.000" aria-label={`${r} Länge y`} />
                    <Field defaultValue="5.000" aria-label={`${r} Breite x`} />
                    <Field defaultValue="2.500" aria-label={`${r} Höhe z`} />
                    <ValueBox><BareField defaultValue="62.5" aria-label={`${r} Volumen`} /><CalcButton aria-label="Rechner"><Calc /></CalcButton></ValueBox>
                  </React.Fragment>
                ))}
              </Rooms>
            </Group>
            <Offsets>
              <span>Versetzter Grundriss</span>
              <OffsetGroup>dy<Field defaultValue="0.000" /><SpinPair /></OffsetGroup>
              <OffsetGroup $end>dz<Field defaultValue="0.000" /><SpinPair /></OffsetGroup>
            </Offsets>
            <Viewport><BuildingView /></Viewport>
          </Column>
        </Page>
      </Window>
    </>
  );
}
